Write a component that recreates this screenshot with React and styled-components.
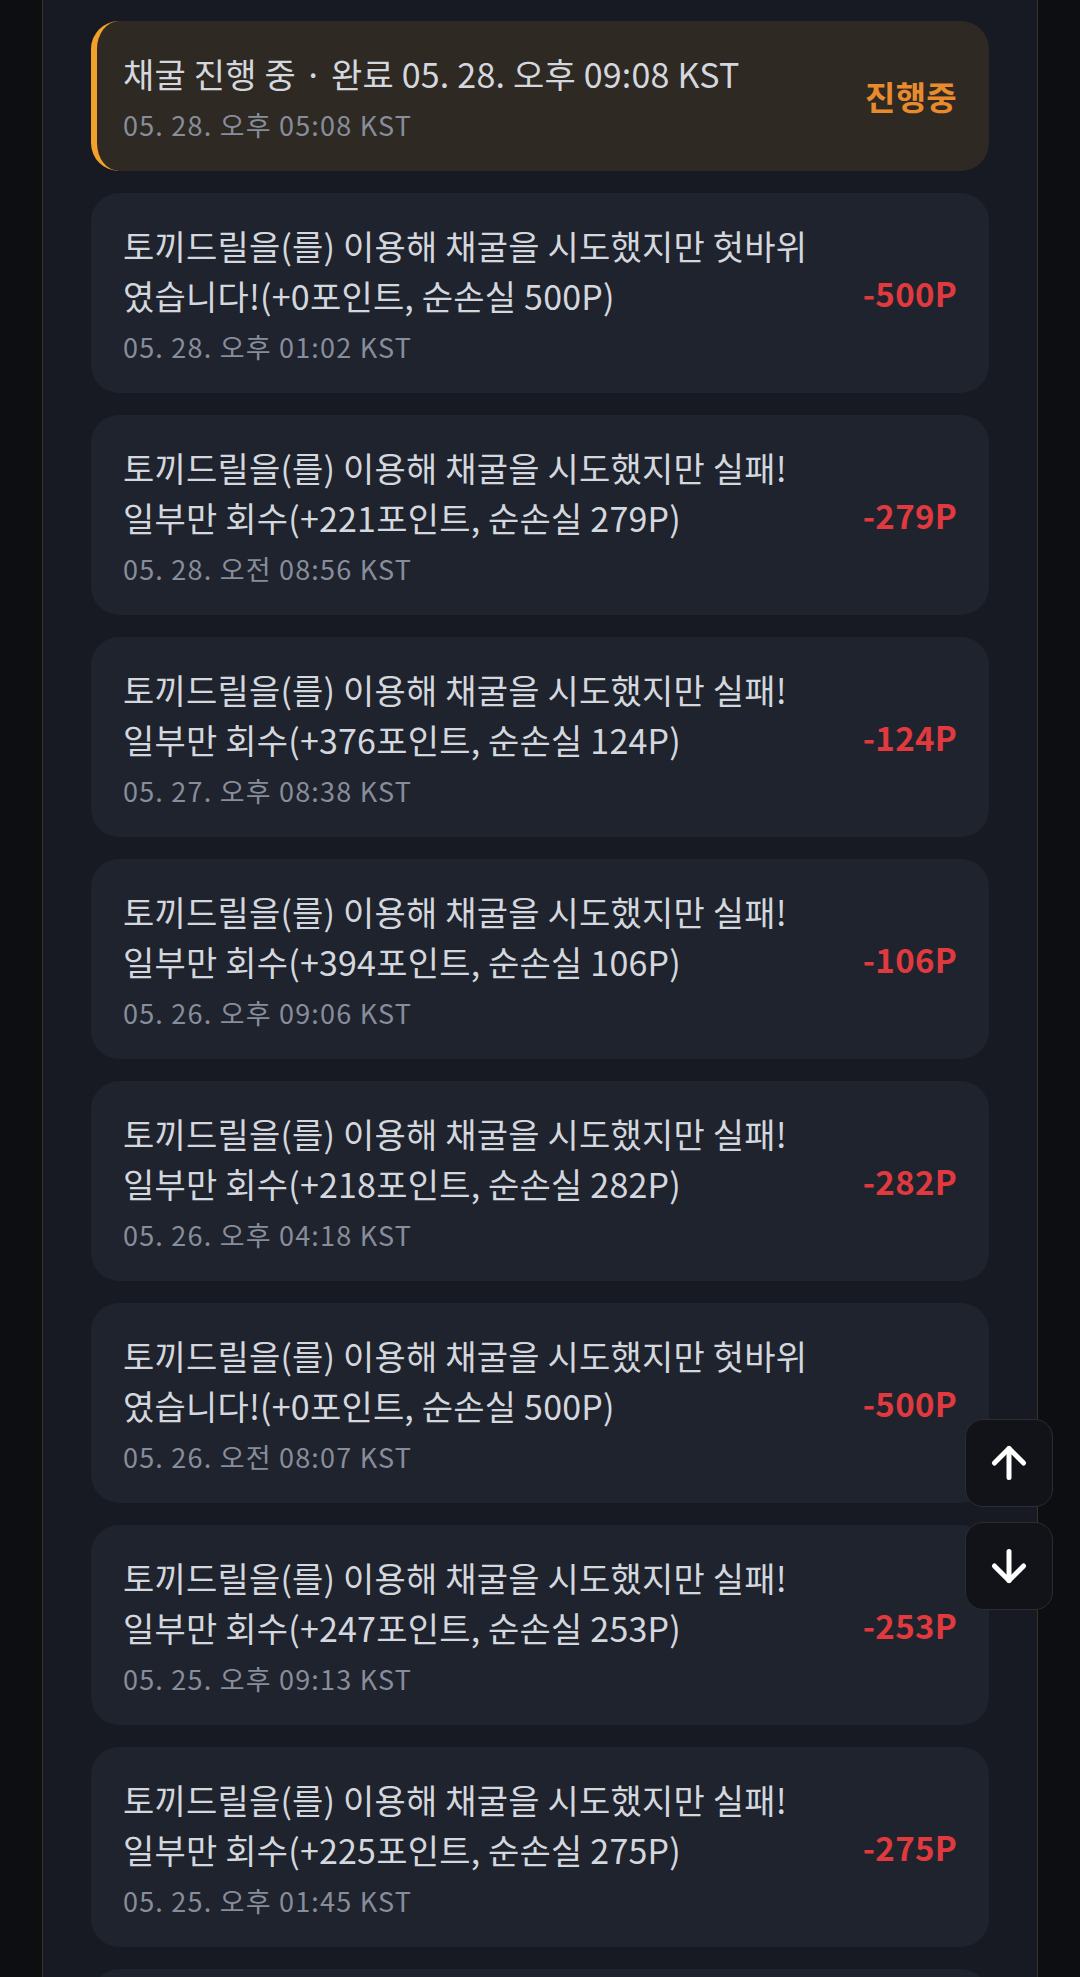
import styled, { createGlobalStyle } from 'styled-components';
import { ArrowUp, ArrowDown } from 'lucide-react';

const GlobalStyle = createGlobalStyle`
    html, body {
        margin: 0;
        padding: 0;
        background: #0d0e12;
    }
    body {
        font-family: "Noto Sans CJK KR", "Noto Sans", sans-serif;
        -webkit-font-smoothing: antialiased;
    }
`;

const fail = (gain, loss, date) => ({
    lines: ['토끼드릴을(를) 이용해 채굴을 시도했지만 실패!', `일부만 회수(+${gain}포인트, 순손실 ${loss}P)`],
    date,
    amount: `-${loss}P`,
});

const miss = (date) => ({
    lines: ['토끼드릴을(를) 이용해 채굴을 시도했지만 헛바위', '였습니다!(+0포인트, 순손실 500P)'],
    date,
    amount: '-500P',
});

const history = [
    miss('05. 28. 오후 01:02 KST'),
    fail(221, 279, '05. 28. 오전 08:56 KST'),
    fail(376, 124, '05. 27. 오후 08:38 KST'),
    fail(394, 106, '05. 26. 오후 09:06 KST'),
    fail(218, 282, '05. 26. 오후 04:18 KST'),
    miss('05. 26. 오전 08:07 KST'),
    fail(247, 253, '05. 25. 오후 09:13 KST'),
    fail(225, 275, '05. 25. 오후 01:45 KST'),
    fail(312, 188, '05. 25. 오전 07:21 KST'),
];

const App = () => {
    return (
        <>
            <GlobalStyle />
            <Page>
                <List>
                    <Card active>
                        <Body>
                            <Title>채굴 진행 중 · 완료 05. 28. 오후 09:08 KST</Title>
                            <Date>05. 28. 오후 05:08 KST</Date>
                        </Body>
                        <Amount active>진행중</Amount>
                    </Card>
                    {history.map((item, i) => (
                        <Card key={i}>
                            <Body>
                                <Title>
                                    {item.lines.map((line) => (
                                        <Line key={line}>{line}</Line>
                                    ))}
                                </Title>
                                <Date>{item.date}</Date>
                            </Body>
                            <Amount>{item.amount}</Amount>
                        </Card>
                    ))}
                </List>
            </Page>
            <ScrollButtons>
                <ScrollButton aria-label="맨 위로">
                    <ArrowUp size={50} strokeWidth={2.4} />
                </ScrollButton>
                <ScrollButton aria-label="맨 아래로">
                    <ArrowDown size={50} strokeWidth={2.4} />
                </ScrollButton>
            </ScrollButtons>
        </>
    );
};

export default App;

const Page = styled.div`
    box-sizing: border-box;
    width: 996px;
    min-height: 100vh;
    margin-left: 42px;
    padding: 21px 48px;
    background: #171a22;
    border-left: 1px solid #3b3226;
    border-right: 1px solid #3b3226;
`;

const List = styled.div`
    display: flex;
    flex-direction: column;
    gap: 22px;
`;

const Card = styled.div`
    display: flex;
    align-items: center;
    justify-content: space-between;
    padding: 28px 32px 28px ${props => props.active ? '26px' : '32px'};
    border-radius: 28px;
    background: ${props => props.active ? '#2e2923' : '#1f232d'};
    border-left: ${props => props.active ? '6px solid #f2a12a' : 'none'};
`;

const Body = styled.div`
    display: flex;
    flex-direction: column;
    min-width: 0;
`;

const Title = styled.div`
    color: #d4d7de;
    font-size: 34px;
    line-height: 50px;
    letter-spacing: 0.2px;
`;

const Line = styled.span`
    display: block;
    white-space: nowrap;
`;

const Date = styled.div`
    margin-top: 8px;
    color: #878d9b;
    font-size: 27px;
    line-height: 36px;
    letter-spacing: 1.2px;
`;

const Amount = styled.div`
    flex-shrink: 0;
    font-size: 33px;
    font-weight: 700;
    letter-spacing: 0.3px;
    color: ${props => props.active ? '#e88b2c' : '#e03a3f'};
`;

const ScrollButtons = styled.div`
    position: fixed;
    right: 27px;
    bottom: 367px;
    display: flex;
    flex-direction: column;
    gap: 15px;
`;

const ScrollButton = styled.button`
    display: flex;
    align-items: center;
    justify-content: center;
    width: 88px;
    height: 88px;
    padding: 0;
    border-radius: 18px;
    border: 1px solid #2b2d34;
    background: #121318;
    color: #ffffff;
    cursor: pointer;
`;
